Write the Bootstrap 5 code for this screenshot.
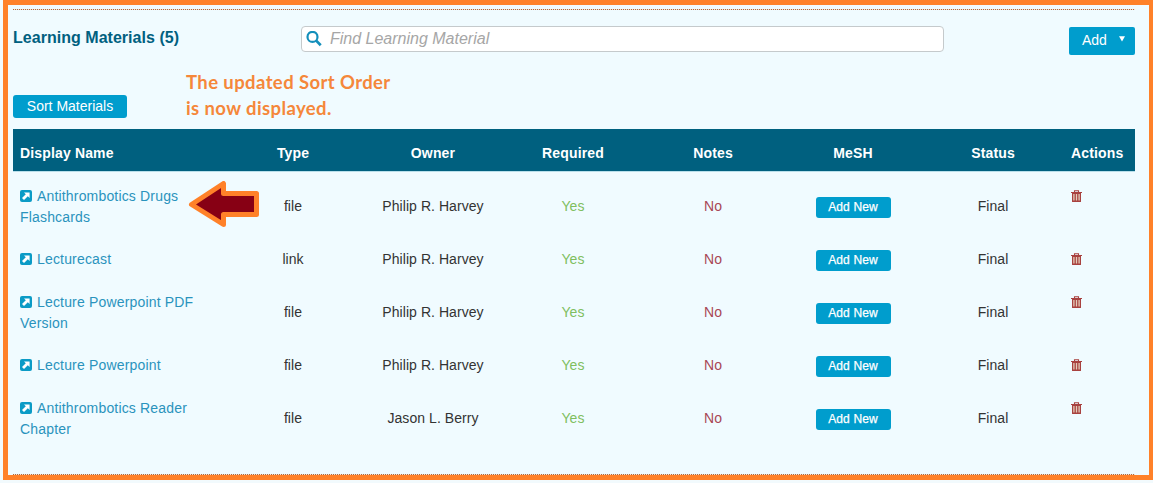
<!DOCTYPE html>
<html lang="en">
<head>
<meta charset="utf-8">
<meta name="viewport" content="width=device-width, initial-scale=1">
<title>Learning Materials</title>
<link href="https://cdn.jsdelivr.net/npm/bootstrap@5.3.0/dist/css/bootstrap.min.css" rel="stylesheet">
<style>
body{background:#f2fafd;font-family:"Liberation Sans",Arial,sans-serif;font-size:14px;line-height:21px;color:#333;overflow:hidden}
.frame{width:1150px;height:480px;margin-left:3px;border:5px solid #ff8129;border-right-width:4px;background:#f0fbff;padding:4px 14px 0 5px}
.dots-top{height:2px;width:1122px;background:repeating-linear-gradient(90deg,#ad693d 0 1px,#f0e4da 1px 2px) 0 0/100% 1px no-repeat}
.dots-end{height:1px;width:1122px;background:repeating-linear-gradient(90deg,#ad693d 0 1px,#f0e4da 1px 2px)}
.toolbar{height:84px;width:1122px}
.heading{font-size:16px;line-height:21px;font-weight:700;color:#00607f;width:288px;margin:16px 0 0;letter-spacing:.03px}
.search-box{width:643px;height:26px;margin-top:15px;border:1px solid #c5cacc;border-radius:4px;background:#fff;padding:0 4px}
.search-box input{border:0;outline:0;background:none;padding:0;font-size:16px;font-style:italic;line-height:24px;flex:1}
.search-box input::placeholder{color:#a6a6a6;opacity:1}
.btn-sea{background:#009dcd;color:#fff;border:0;border-radius:2px;padding:0}
.btn-sea:hover{background:#007fa6;color:#fff}
.btn-add{width:66px;height:28px;margin:16px 0 0 125px;font-size:14px;line-height:27px}
.btn-sort{width:114px;height:23px;font-size:14px;line-height:21px;border-radius:3px}
.btn-mesh{width:75px;height:21px;font-size:12px;line-height:18px;border-radius:3px;font-weight:400;display:block;margin:1px auto 0;letter-spacing:.15px;-webkit-text-stroke:.25px #fff}
.callout-text{font-family:Lato,"Open Sans",sans-serif;font-weight:700;font-size:18.5px;line-height:26px;letter-spacing:.4px;color:#f5873a}
.materials{width:1122px;table-layout:fixed;border-collapse:separate;border-spacing:0}
.materials th{background:#00607f;color:#fff;height:42px;padding:6px 0 0;text-align:center;letter-spacing:.15px}
.materials td{padding:0;text-align:center;vertical-align:middle;height:43px;letter-spacing:.06px}
.materials th:first-child,.materials td:first-child{text-align:left;padding-left:7px}
.materials th:last-child,.materials td:last-child{text-align:left;padding-left:8px}
.materials .two-line td{height:63px}
.materials .two-line td:last-child{vertical-align:top;padding-top:10px}
.materials a{color:#2a93bd;text-decoration:none;letter-spacing:.17px}
.materials a svg{vertical-align:-1px;margin-right:5px}
.yes{color:#7fbf5f}.no{color:#a84755}
.trash{display:block;margin:5px 0 6px}
.pointer{position:absolute;left:175px;top:6px}
</style>
</head>
<body>
<svg class="d-none"><defs>
<symbol id="ext" viewBox="0 0 12 12"><rect width="12" height="12" rx="2" fill="#0b9bc6"/><path d="M4 2.4h5.6V8L7.8 6.2 4 10 2 8l3.8-3.8z" fill="#fff"/></symbol>
<symbol id="bin" viewBox="0 0 11 12"><path d="M3.5 2V.7h4V2M0 2.5h11" fill="none" stroke="#a8413f" stroke-width="1.1"/><path d="M1 3h9v8.500q0 .5-.5.5h-8q-.5 0-.5-.5z" fill="#a8413f"/><path d="M2.900 4v6.500M5.500 4v6.500M8.100 4v6.500" stroke="#e3cdbb" stroke-width="1.300"/></symbol>
</defs></svg>
<main class="frame">
 <div class="dots-top"></div>
 <header class="toolbar d-flex align-items-start">
  <h2 class="heading">Learning Materials (5)</h2>
  <label class="search-box d-flex align-items-center">
   <svg width="16" height="16" viewBox="0 0 16 16" fill="none" stroke="#148fbb"><circle cx="6.500" cy="5.900" r="5" stroke-width="2.200"/><path d="M10.200 9.600l4.500 4.600" stroke-width="2.700"/></svg>
   <input class="ms-2" type="text" placeholder="Find Learning Material" aria-label="Find Learning Material">
  </label>
  <button class="btn btn-sea btn-add d-flex" type="button"><span style="margin-left:13px">Add</span><svg width="6" height="6" style="margin:9px 0 0 12px" viewBox="0 0 6 6"><path d="M0 .2h6L3 5.600z" fill="#fff"/></svg></button>
 </header>
 <div class="d-flex" style="height:34px">
  <button class="btn btn-sea btn-sort" type="button">Sort Materials</button>
  <div class="callout-text" style="margin:-26px 0 0 59px">The updated Sort Order<br>is now displayed.</div>
 </div>
 <table class="materials">
  <colgroup><col style="width:210px"><col style="width:140px"><col style="width:140px"><col style="width:140px"><col style="width:140px"><col style="width:140px"><col style="width:140px"><col style="width:72px"></colgroup>
  <thead><tr><th>Display Name</th><th>Type</th><th>Owner</th><th>Required</th><th>Notes</th><th>MeSH</th><th>Status</th><th>Actions</th></tr></thead>
  <tbody>
   <tr><td colspan="8" style="height:4px;border-top:1px solid #b9dfea"></td></tr>
   <tr class="two-line"><td class="position-relative"><a href="#"><svg width="12" height="12"><use href="#ext"/></svg>Antithrombotics Drugs<br>Flashcards</a>
    <svg class="pointer" width="72" height="48" viewBox="188 181 72 48"><path d="M191.5 204.5L223.5 183.5V193.5H256.5V214.5H223.5V224.5Z" fill="#870014" stroke="#ff8129" stroke-width="5" stroke-linejoin="round"/></svg></td>
    <td>file</td><td>Philip R. Harvey</td><td class="yes">Yes</td><td class="no">No</td><td><button class="btn btn-sea btn-mesh">Add New</button></td><td>Final</td><td><svg class="trash" width="11" height="12"><use href="#bin"/></svg></td></tr>
   <tr><td><a href="#"><svg width="12" height="12"><use href="#ext"/></svg>Lecturecast</a></td>
    <td>link</td><td>Philip R. Harvey</td><td class="yes">Yes</td><td class="no">No</td><td><button class="btn btn-sea btn-mesh">Add New</button></td><td>Final</td><td><svg class="trash" width="11" height="12"><use href="#bin"/></svg></td></tr>
   <tr class="two-line"><td><a href="#"><svg width="12" height="12"><use href="#ext"/></svg>Lecture Powerpoint PDF<br>Version</a></td>
    <td>file</td><td>Philip R. Harvey</td><td class="yes">Yes</td><td class="no">No</td><td><button class="btn btn-sea btn-mesh">Add New</button></td><td>Final</td><td><svg class="trash" width="11" height="12"><use href="#bin"/></svg></td></tr>
   <tr><td><a href="#"><svg width="12" height="12"><use href="#ext"/></svg>Lecture Powerpoint</a></td>
    <td>file</td><td>Philip R. Harvey</td><td class="yes">Yes</td><td class="no">No</td><td><button class="btn btn-sea btn-mesh">Add New</button></td><td>Final</td><td><svg class="trash" width="11" height="12"><use href="#bin"/></svg></td></tr>
   <tr class="two-line"><td><a href="#"><svg width="12" height="12"><use href="#ext"/></svg>Antithrombotics Reader<br>Chapter</a></td>
    <td>file</td><td>Jason L. Berry</td><td class="yes">Yes</td><td class="no">No</td><td><button class="btn btn-sea btn-mesh">Add New</button></td><td>Final</td><td><svg class="trash" width="11" height="12"><use href="#bin"/></svg></td></tr>
  </tbody>
 </table>
 <div class="dots-end" style="margin-top:24px"></div>
</main>
<script src="https://cdn.jsdelivr.net/npm/bootstrap@5.3.0/dist/js/bootstrap.bundle.min.js"></script>
</body>
</html>
